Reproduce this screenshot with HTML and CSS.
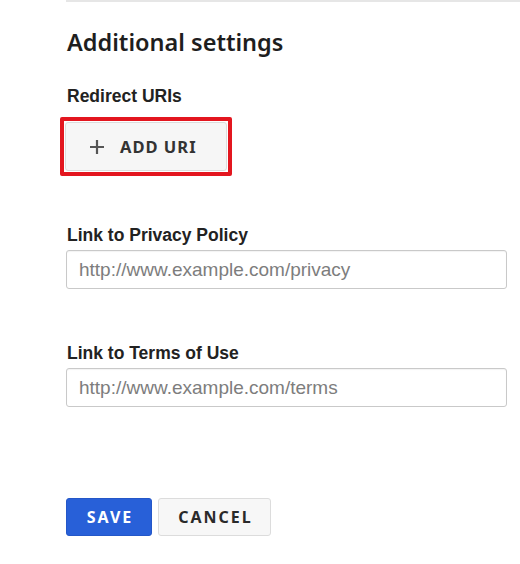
FILE: index.html
```html
<!DOCTYPE html>
<html lang="en">
<head>
<meta charset="utf-8">
<title>Additional settings</title>
<link rel="stylesheet" href="styles.css">
</head>
<body>
<div class="panel">
  <h2 class="heading">Additional settings</h2>
  <div class="field-label first">Redirect URIs</div>
  <div class="highlight">
    <button class="add-btn" type="button">
      <svg class="plus" width="16" height="16" viewBox="0 0 16 16" aria-hidden="true">
        <path d="M8 1v14M1 8h14" stroke="#555" stroke-width="2.2" fill="none"/>
      </svg>
      <span>ADD URI</span>
    </button>
  </div>
  <label class="field-label second" for="privacy">Link to Privacy Policy</label>
  <input class="text-input" id="privacy" type="text" placeholder="http://www.example.com/privacy">
  <label class="field-label third" for="terms">Link to Terms of Use</label>
  <input class="text-input" id="terms" type="text" placeholder="http://www.example.com/terms">
  <div class="actions">
    <button class="btn btn-save" type="button">SAVE</button>
    <button class="btn btn-cancel" type="button">CANCEL</button>
  </div>
</div>
</body>
</html>
```

FILE: styles.css
```css
html, body {
  margin: 0;
  padding: 0;
  background: #ffffff;
}

.panel {
  margin-left: 66px;
  border-top: 2px solid #e6e6e6;
  padding-top: 24px;
  display: flex;
  flex-direction: column;
  align-items: flex-start;
}

.heading {
  margin: 0 0 0 1px;
  font-family: "Noto Sans", sans-serif;
  font-weight: 600;
  font-size: 23.5px;
  line-height: 32px;
  letter-spacing: 0;
  color: #1e1e1e;
}

.field-label {
  display: block;
  margin-left: 1px;
  font-family: "Liberation Sans", Arial, sans-serif;
  font-weight: 700;
  font-size: 17.5px;
  line-height: 20px;
  color: #222;
}

.field-label.first { margin-top: 28px; }
.field-label.second { margin-top: 49px; }
.field-label.third { margin-top: 54px; }

.highlight {
  margin-top: 11px;
  margin-left: -6px;
  padding: 1px;
  border: 4px solid #e3161f;
  border-radius: 2px;
}

.add-btn {
  display: flex;
  height: 49px;
  width: 162px;
  padding: 0 0 0 23px;
  align-items: center;
  gap: 15px;
  background: #f6f6f6;
  border: 1px solid #dcdcdc;
  border-radius: 3px;
  font-family: "Noto Sans", sans-serif;
  font-weight: 700;
  font-size: 16.5px;
  letter-spacing: 1px;
  color: #333;
  cursor: pointer;
}

.plus { flex: none; }

.text-input {
  box-sizing: border-box;
  margin-top: 5px;
  width: 441px;
  height: 39px;
  padding: 0 12px;
  border: 1px solid #c9c9c9;
  border-radius: 3px;
  box-shadow: inset 0 1px 1px rgba(0,0,0,0.05);
  font-family: "Liberation Sans", Arial, sans-serif;
  font-size: 19px;
  color: #333;
  background: #fff;
}

.text-input::placeholder {
  color: #7d7d7d;
}

.actions {
  margin-top: 91px;
  display: flex;
  gap: 6px;
}

.btn {
  box-sizing: border-box;
  height: 38px;
  border-radius: 3px;
  font-family: "Noto Sans", sans-serif;
  font-weight: 700;
  font-size: 16px;
  letter-spacing: 2px;
  padding: 0 0 0 2px;
  cursor: pointer;
}

.btn-save {
  width: 86px;
  background: #2860d8;
  border: 1px solid #2457c8;
  color: #fff;
}

.btn-cancel {
  width: 113px;
  background: #f7f7f7;
  border: 1px solid #dcdcdc;
  color: #2a2a2a;
}
```
